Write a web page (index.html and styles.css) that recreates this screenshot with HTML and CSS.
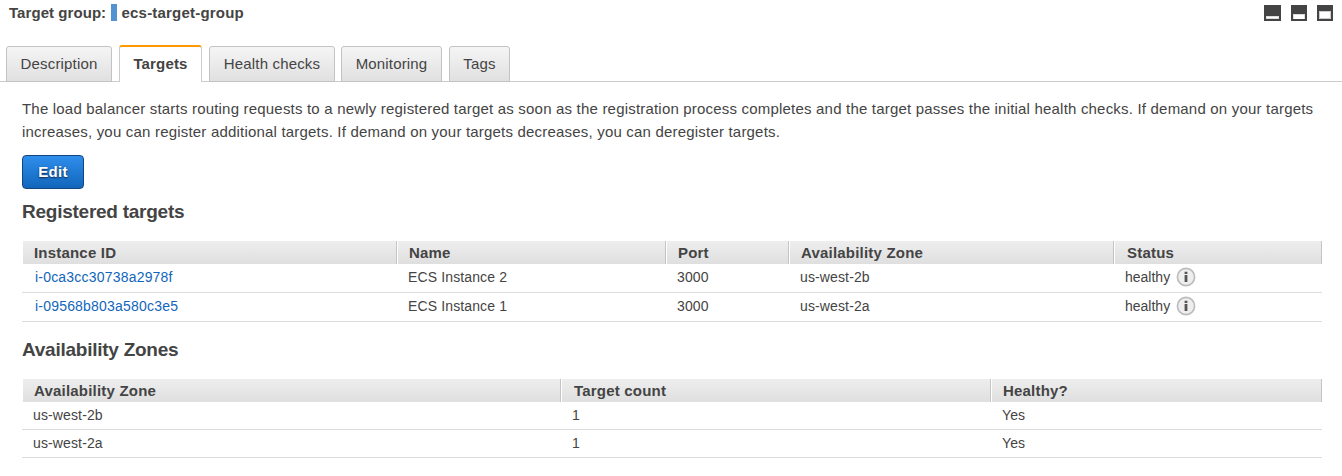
FILE: index.html
```html
<!DOCTYPE html>
<html lang="en">
<head>
<meta charset="utf-8">
<title>Target group: ecs-target-group</title>
<link rel="stylesheet" href="styles.css">
</head>
<body>
<header class="panel-header">
  <h1 class="panel-title"><span class="title-label">Target group:</span><span class="title-mark"></span><span class="title-name">ecs-target-group</span></h1>
  <div class="pane-controls">
    <svg width="17" height="16" viewBox="0 0 17 16"><rect width="17" height="16" fill="#444"/><rect x="2" y="11" width="13" height="3" fill="#ddd"/><rect x="3" y="12" width="11" height="1" fill="#fff"/></svg>
    <svg width="16" height="16" viewBox="0 0 16 16"><rect width="16" height="16" fill="#444"/><rect x="2" y="9" width="12" height="5" fill="#ddd"/><rect x="3" y="10" width="10" height="4" fill="#fff"/></svg>
    <svg width="16" height="16" viewBox="0 0 16 16"><rect width="16" height="16" fill="#444"/><rect x="2" y="6" width="12" height="8" fill="#ccc"/><rect x="3" y="7" width="10" height="6" fill="#fff"/></svg>
  </div>
</header>
<nav class="tabs">
  <a class="tab tab-description">Description</a>
  <a class="tab tab-active">Targets</a>
  <a class="tab tab-health">Health checks</a>
  <a class="tab tab-monitoring">Monitoring</a>
  <a class="tab tab-tags">Tags</a>
</nav>
<main class="content">
  <p class="intro"><span class="line">The load balancer starts routing requests to a newly registered target as soon as the registration process completes and the target passes the initial health checks. If demand on your targets</span> <span class="line">increases, you can register additional targets. If demand on your targets decreases, you can deregister targets.</span></p>
  <button class="edit">Edit</button>
  <h2 class="section-title">Registered targets</h2>
  <div class="table targets">
    <div class="row head"><span>Instance ID</span><span>Name</span><span>Port</span><span>Availability Zone</span><span class="wide-pad">Status</span></div>
    <div class="row"><a class="link">i-0ca3cc30738a2978f</a><span>ECS Instance 2</span><span>3000</span><span>us-west-2b</span><span class="status">healthy <svg class="info" width="20" height="20" viewBox="0 0 20 20"><circle cx="10" cy="10" r="8.6" fill="#eee" stroke="#bbb" stroke-width="1.6"/><path d="M8.6 4.8h2.8v2.2H8.6zM8.6 8h2.8v7H8.6z" fill="#555"/></svg></span></div>
    <div class="row"><a class="link">i-09568b803a580c3e5</a><span>ECS Instance 1</span><span>3000</span><span>us-west-2a</span><span class="status">healthy <svg class="info" width="20" height="20" viewBox="0 0 20 20"><circle cx="10" cy="10" r="8.6" fill="#eee" stroke="#bbb" stroke-width="1.6"/><path d="M8.6 4.8h2.8v2.2H8.6zM8.6 8h2.8v7H8.6z" fill="#555"/></svg></span></div>
  </div>
  <h2 class="section-title zones-title">Availability Zones</h2>
  <div class="table zones">
    <div class="row head"><span>Availability Zone</span><span class="wide-pad">Target count</span><span>Healthy?</span></div>
    <div class="row"><span>us-west-2b</span><span>1</span><span>Yes</span></div>
    <div class="row"><span>us-west-2a</span><span>1</span><span>Yes</span></div>
  </div>
</main>
</body>
</html>
```
FILE: styles.css
```css
* { box-sizing: border-box; }
body {
  margin: 0;
  height: 476px;
  overflow: hidden;
  background: #fff;
  color: #444;
  font-family: "Liberation Sans", Arial, sans-serif;
  font-size: 15px;
}
.panel-header {
  display: flex;
  justify-content: space-between;
  height: 45px;
  padding: 4px 9px 0 9px;
}
.panel-title {
  display: flex;
  margin: 0;
  font-size: 15px;
  line-height: 18px;
  white-space: nowrap;
}
.title-label { width: 97px; letter-spacing: 0.06px; }
.title-name { letter-spacing: 0.2px; }
.title-mark {
  width: 6px;
  height: 17px;
  margin: 0 4.5px 0 5px;
  background: #5294cf;
}
.pane-controls {
  display: flex;
  gap: 10px;
  padding-top: 1px;
}
.pane-controls svg { display: block; }
.tabs {
  display: flex;
  align-items: flex-end;
  gap: 7px;
  height: 37px;
  padding-left: 6px;
  background: linear-gradient(#ccc, #ccc) bottom / 100% 1px no-repeat;
}
.tab {
  height: 36px;
  border: 1px solid #c3c3c3;
  border-radius: 3px 3px 0 0;
  background: linear-gradient(#f5f5f5, #e0e0e0);
  line-height: 34px;
  text-align: center;
  white-space: nowrap;
  letter-spacing: 0.16px;
}
.tab-description { width: 106px; }
.tab-active {
  width: 83px;
  height: 37px;
  border-color: #ccc;
  border-top: 2px solid #f90;
  border-bottom: 0;
  background: #fff;
  font-weight: bold;
  line-height: 33px;
}
.tab-health { width: 126px; }
.tab-monitoring { width: 101px; margin-left: -1px; }
.tab-tags { width: 61px; }
.content { padding: 15px 20px 0 22px; }
.intro { margin: 0; line-height: 23px; letter-spacing: 0.195px; }
.line { display: block; white-space: nowrap; }
.edit {
  display: block;
  width: 62px;
  height: 34px;
  margin-top: 12px;
  padding: 0 0 2px;
  border: 1px solid #13457c;
  border-radius: 4px;
  background: linear-gradient(#2f8eec, #1166bb);
  color: #fff;
  font: bold 15px "Liberation Sans", Arial, sans-serif;
  letter-spacing: 0.35px;
  text-shadow: 0 1px 2px #124;
}
.section-title {
  height: 24px;
  margin: 10px 0 18px;
  font-size: 19px;
  letter-spacing: -0.25px;
  line-height: 26px;
}
.zones-title { margin-top: 15px; }
.table { width: 1300px; font-size: 14px; }
.row {
  display: grid;
  height: 29px;
  border-bottom: 1px solid #ddd;
  letter-spacing: 0.13px;
  line-height: 27px;
}
.targets .row { grid-template-columns: 375px 269px 123px 325px 208px; }
.zones .row { grid-template-columns: 539px 430px 331px; height: 28px; line-height: 26px; }
.row > * { padding-left: 11px; white-space: nowrap; }
.targets .link { padding-left: 13px; color: #1166bb; letter-spacing: 0.2px; }
.table .head {
  height: 23px;
  margin-left: 1px;
  border: 0;
  background: linear-gradient(#eee, #dfdfdf);
  font-size: 15px;
  font-weight: bold;
  letter-spacing: 0.2px;
  line-height: 24px;
}
.targets .head { grid-template-columns: 374px 269px 123px 325px 208px; }
.zones .head { grid-template-columns: 538px 430px 331px; }
.head > span {
  height: 23px;
  padding-left: 12px;
  border-right: 1px solid #c4c4c4;
  box-shadow: inset 1px 0 #fff;
}
.head > span:first-child { padding-left: 11px; box-shadow: none; }
.head > .wide-pad { padding-left: 13px; }
.status { display: flex; height: 27px; align-items: center; gap: 6px; letter-spacing: 0; }
.info { display: block; margin-top: -1px; }
```
